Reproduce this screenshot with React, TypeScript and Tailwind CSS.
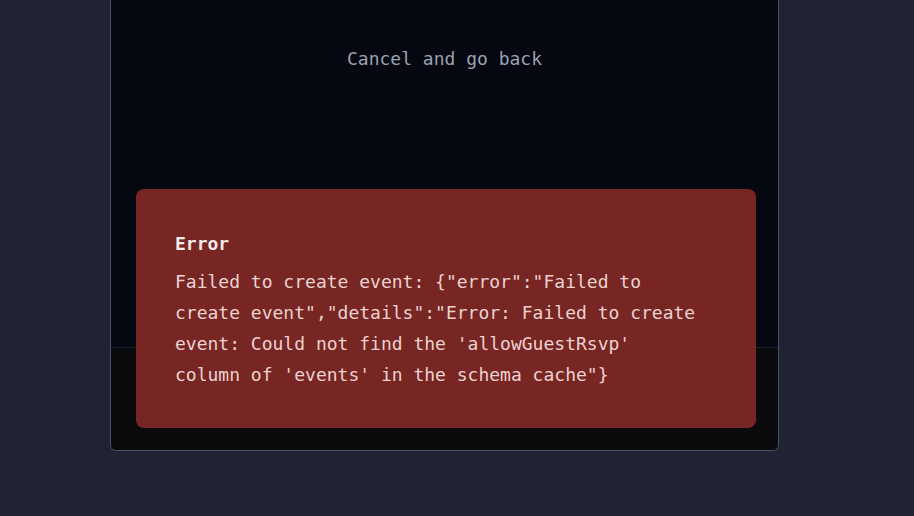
import React from 'react';

const mono = { fontFamily: '"DejaVu Sans Mono", "Liberation Mono", monospace' };

// --- Error toast over the form ---
const ErrorBox: React.FC<{ title: string; message: string }> = ({ title, message }) => (
    <div className="absolute left-[25px] top-[189px] w-[620px] h-[239px] rounded-lg bg-[#772623] pl-[39px] pr-[52px] pt-[43px]">
        <h3 className="text-[18px] font-semibold text-[#f4eaea] leading-[24px]">{title}</h3>
        <p className="mt-[10px] text-[18px] leading-[31px] text-[#ecd2d0]">{message}</p>
    </div>
);

const App: React.FC = () => {
    const message = `Failed to create event: {"error":"Failed to create event","details":"Error: Failed to create event: Could not find the 'allowGuestRsvp' column of 'events' in the schema cache"}`;

    return (
        <div className="w-[914px] h-[516px] bg-[#1f2333] overflow-hidden" style={mono}>
            <div className="relative ml-[110px] w-[669px] h-[451px] border-x border-b border-[#4a5160] rounded-b-md bg-[#050711] overflow-hidden">
                <div className="h-[347px] flex justify-center pt-[45px]">
                    <button className="h-[24px] text-[18px] text-[#9aa3b2]">Cancel and go back</button>
                </div>
                <div className="h-[103px] border-t border-[#1c2230] bg-[#0b0b0d]" />
                <ErrorBox title="Error" message={message} />
            </div>
        </div>
    );
};

export default App;
